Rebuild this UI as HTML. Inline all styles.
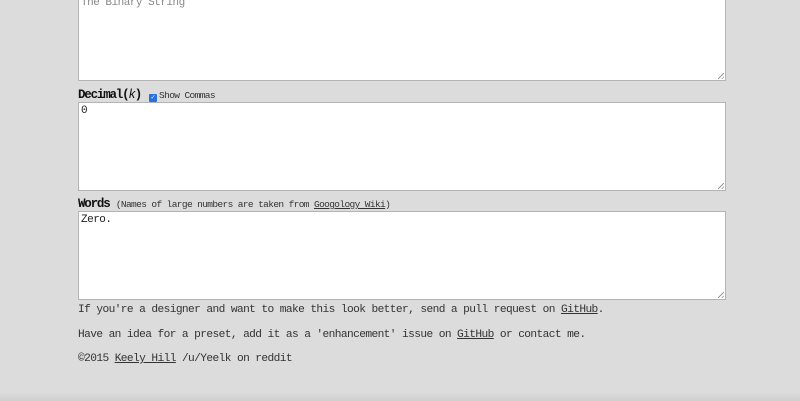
<!DOCTYPE html>
<html><head><style>
html,body{margin:0;padding:0;}
body{width:800px;height:401px;background:#dcdcdc;position:relative;overflow:hidden;font-family:"Liberation Mono","DejaVu Sans Mono",monospace;color:#222;}
.ta{position:absolute;left:78px;width:648px;background:#fff;border:1px solid #b4b4b4;box-sizing:border-box;font-size:11px;letter-spacing:-0.5px;padding:2px 2px;color:#222;}
.ta.ph{color:#888;}
.grip{position:absolute;right:1px;bottom:1px;width:6px;height:6px;background:linear-gradient(135deg,transparent 45%,#999 45%,#999 55%,transparent 55%,transparent 75%,#999 75%,#999 85%,transparent 85%);}
.lbl{position:absolute;left:78px;font-size:12.5px;letter-spacing:-1.2px;font-weight:bold;color:#111;}
.small{font-size:9.5px;letter-spacing:-0.62px;font-weight:normal;color:#333;}
.p{position:absolute;left:78px;font-size:11.2px;letter-spacing:-0.6px;color:#333;white-space:pre;}
a{color:#333;text-decoration:underline;}
.cb{display:inline-block;width:8px;height:8px;background:#2a6fdb;border-radius:1px;vertical-align:-1px;margin:0 2px 0 8px;color:#fff;font-size:7px;line-height:8px;text-align:center;letter-spacing:0;}
.shadow{position:absolute;left:0;right:0;top:392px;height:9px;background:linear-gradient(#dcdcdc,#cfcfcf);}
</style></head><body>
<div class="ta ph" style="top:-10px;height:91px;padding-top:6px;">The Binary String<div class="grip"></div></div>
<div class="lbl" style="top:88px;">Decimal(<i style="font-weight:normal">k</i>)<span class="small"><span class="cb">✓</span>Show Commas</span></div>
<div class="ta" style="top:102px;height:89px;">0<div class="grip"></div></div>
<div class="lbl" style="top:197px;">Words <span class="small">(Names of large numbers are taken from <a>Googology Wiki</a>)</span></div>
<div class="ta" style="top:211px;height:89px;">Zero.<div class="grip"></div></div>
<div class="p" style="top:304px;">If you're a designer and want to make this look better, send a pull request on <a>GitHub</a>.</div>
<div class="p" style="top:329px;">Have an idea for a preset, add it as a 'enhancement' issue on <a>GitHub</a> or contact me.</div>
<div class="p" style="top:353px;">©2015 <a>Keely Hill</a> /u/Yeelk on reddit</div>
<div class="shadow"></div>
</body></html>
